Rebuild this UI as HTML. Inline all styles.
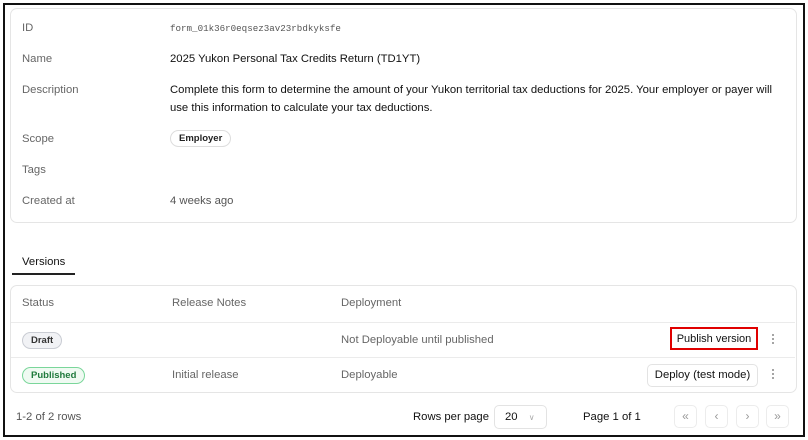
<!DOCTYPE html>
<html><head><style>
*{box-sizing:border-box;margin:0;padding:0}
body{width:808px;height:440px;background:#fff;font-family:"Liberation Sans",sans-serif;font-size:11.3px;color:#111;position:relative;overflow:hidden}
.frame{position:absolute;left:3px;top:3px;width:802px;height:434px;border:2px solid #111}
.abs{position:absolute;white-space:nowrap}
.lbl{color:#666;left:22px}
.val{left:170px;color:#111}
.card{position:absolute;border:1px solid #e5e5e5;border-radius:7px;background:#fff}
.pill{position:absolute;border:1px solid #ddd;border-radius:9px;font-size:9.5px;font-weight:bold;padding:0 8px;line-height:15px}
.line{position:absolute;left:11px;width:784px;height:1px;background:#ebebeb}
.btn{position:absolute;border:1px solid #e3e3e3;border-radius:5px;background:#fff;font-size:11.3px;text-align:center;color:#111}
.dots{position:absolute;left:772px;width:3px}
.dot{width:2px;height:2px;background:#888;border-radius:1px;margin:2px 0}
.pg{position:absolute;top:405px;width:23px;height:23px;border:1px solid #ececec;border-radius:5px;color:#999;font-size:12px;text-align:center;line-height:20px}
</style></head><body>
<div class="frame"></div>
<div class="card" style="left:10px;top:8px;width:787px;height:215px"></div>
<div class="abs lbl" style="top:22px">ID</div>
<div class="abs val" style="top:23px;font-family:'Liberation Mono',monospace;font-size:9.2px;color:#555">form_01k36r0eqsez3av23rbdkyksfe</div>
<div class="abs lbl" style="top:53px">Name</div>
<div class="abs val" style="top:53px">2025 Yukon Personal Tax Credits Return (TD1YT)</div>
<div class="abs lbl" style="top:84px">Description</div>
<div class="abs val" style="top:81px;line-height:18px">Complete this form to determine the amount of your Yukon territorial tax deductions for 2025. Your employer or payer will<br>use this information to calculate your tax deductions.</div>
<div class="abs lbl" style="top:133px">Scope</div>
<div class="pill" style="left:170px;top:130px;color:#222">Employer</div>
<div class="abs lbl" style="top:164px">Tags</div>
<div class="abs lbl" style="top:195px">Created at</div>
<div class="abs val" style="top:195px;color:#555">4 weeks ago</div>

<div class="abs" style="left:22px;top:256px">Versions</div>
<div class="abs" style="left:12px;top:273px;width:63px;height:2px;background:#222"></div>

<div class="card" style="left:10px;top:285px;width:787px;height:108px"></div>
<div class="abs lbl" style="top:297px">Status</div>
<div class="abs" style="left:172px;top:297px;color:#666">Release Notes</div>
<div class="abs" style="left:341px;top:297px;color:#666">Deployment</div>
<div class="line" style="top:322px"></div>
<div class="pill" style="left:22px;top:332px;background:#f1f2f5;border-color:#c9ccd3;color:#333">Draft</div>
<div class="abs" style="left:341px;top:334px;color:#666">Not Deployable until published</div>
<div class="btn" style="left:670px;top:327px;width:88px;height:23px;border:2px solid #e00000;border-radius:0;line-height:20px;font-size:11px">Publish version</div>
<div class="dots" style="top:332px"><div class="dot"></div><div class="dot"></div><div class="dot"></div></div>
<div class="line" style="top:357px"></div>
<div class="pill" style="left:22px;top:367px;background:#effaf2;border-color:#7ad69a;color:#1f7a3c">Published</div>
<div class="abs" style="left:172px;top:369px;color:#666">Initial release</div>
<div class="abs" style="left:341px;top:369px;color:#666">Deployable</div>
<div class="btn" style="left:647px;top:364px;width:111px;height:23px;line-height:21px">Deploy (test mode)</div>
<div class="dots" style="top:367px"><div class="dot"></div><div class="dot"></div><div class="dot"></div></div>

<div class="abs" style="left:16px;top:411px;color:#555">1-2 of 2 rows</div>
<div class="abs" style="left:413px;top:411px">Rows per page</div>
<div class="btn" style="left:494px;top:405px;width:53px;height:24px;line-height:22px;text-align:left;padding-left:10px">20 <span style="color:#aaa;font-size:8px;margin-left:8px">&#8744;</span></div>
<div class="abs" style="left:583px;top:411px">Page 1 of 1</div>
<div class="pg" style="left:674px">&laquo;</div>
<div class="pg" style="left:705px">&lsaquo;</div>
<div class="pg" style="left:736px">&rsaquo;</div>
<div class="pg" style="left:766px">&raquo;</div>
</body></html>
